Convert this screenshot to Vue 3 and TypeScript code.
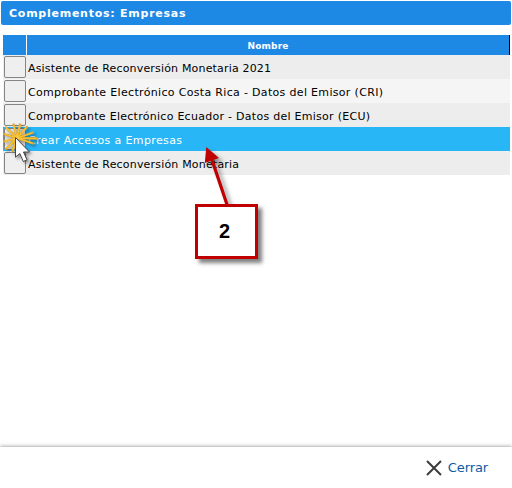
<script setup lang="ts">
interface Complement {
  name: string
  width: number
  selected?: boolean
}

const rows: Complement[] = [
  { name: 'Asistente de Reconversión Monetaria 2021', width: 243 },
  { name: 'Comprobante Electrónico Costa Rica - Datos del Emisor (CRI)', width: 355 },
  { name: 'Comprobante Electrónico Ecuador - Datos del Emisor (ECU)', width: 342 },
  { name: 'Crear Accesos a Empresas', width: 154, selected: true },
  { name: 'Asistente de Reconversión Monetaria', width: 211 },
]
</script>

<template>
  <main class="dialog">
    <h1 class="title">Complementos: Empresas</h1>
    <section class="grid">
      <div class="head">
        <span class="head-check"></span>
        <span class="head-name">Nombre</span>
      </div>
      <div v-for="row in rows" :key="row.name" class="row" :class="{ selected: row.selected }">
        <button class="check" type="button"></button>
        <svg class="name" width="400" height="24">
          <text x="0" y="17" :textLength="row.width" lengthAdjust="spacing">{{ row.name }}</text>
        </svg>
      </div>
    </section>
    <footer class="footer">
      <button class="close" type="button">
        <svg width="16" height="16" viewBox="0 0 16 16">
          <path d="M1 1L15 15M15 1L1 15" fill="none" stroke="#3c3c3c" stroke-width="2" />
        </svg>
        <span>Cerrar</span>
      </button>
    </footer>

    <svg class="click" width="60" height="60" viewBox="0 120 60 60">
      <path
        d="M17 138L6 127.500M17 138L13.500 124.500M17 138L20 124.500M17 138L27 127M17 138L33 132.500M17 138L37 138.500M17 138L33 143.500M17 138L4 134M17 138L4 141.500M17 138L6 149M17 138L12.500 151"
        fill="none" stroke="#dda41c" stroke-width="2.300" stroke-linecap="round"
      />
      <path
        d="M17 138L6.500 128M17 138L13.700 125.500M17 138L19.800 125.500M17 138L26 128M17 138L32 133M17 138L36 138.500M17 138L32 143M17 138L5 134.300M17 138L5 141.200M17 138L7 148M17 138L12.800 150"
        fill="none" stroke="#f8c63c" stroke-width="1.200" stroke-linecap="round"
      />
      <path
        class="pointer"
        d="M15.500 137.500V157.200L19.800 153.500L23.300 161.500L27 159.800L23.500 152H29.500Z"
        fill="#fff" stroke="#454545" stroke-width="1" stroke-linejoin="round"
      />
    </svg>

    <svg class="arrow" width="50" height="70" viewBox="195 140 50 70">
      <path d="M227.500 206L211 157" fill="none" stroke="#c00000" stroke-width="3.200" />
      <path d="M206.300 147L219 158L204.800 163Z" fill="#c00000" />
    </svg>
    <div class="callout">2</div>
  </main>
</template>

<style>
body {
  margin: 0;
  background: #fff;
}
</style>

<style scoped>
.dialog {
  position: relative;
  box-sizing: border-box;
  width: 512px;
  height: 488px;
  padding-top: 1px;
  display: flex;
  flex-direction: column;
  overflow: hidden;
  background: #fff;
  font-family: "DejaVu Sans", Verdana, sans-serif;
}

.title {
  box-sizing: border-box;
  height: 24px;
  margin: 0 1px;
  padding-left: 8px;
  border-radius: 2px;
  background: #1e88e5;
  color: #fff;
  font-size: 11px;
  line-height: 26px;
  font-weight: bold;
  letter-spacing: 0.750px;
}

.grid {
  margin: 10px 2px 0 3px;
}

.head {
  display: flex;
  gap: 1px;
  height: 20px;
}

.head-check,
.head-name {
  background: #1e88e5;
}

.head-check {
  width: 23px;
}

.head-name {
  flex: 1;
  border-right: 1px solid #000;
  color: #fff;
  font-size: 9px;
  line-height: 22px;
  font-weight: bold;
  letter-spacing: 0.150px;
  text-align: center;
}

.row {
  display: flex;
  align-items: center;
  height: 24px;
  padding-left: 1px;
  background: #ededed;
}

.row:nth-child(3) {
  background: #f5f5f5;
}

.row.selected {
  background: #29b6f6;
}

.check {
  box-sizing: border-box;
  width: 22px;
  height: 22px;
  padding: 0;
  border: 1px solid #858585;
  border-radius: 2px;
  background: #efefef;
}

.name {
  margin-left: 2px;
  font-size: 11px;
  fill: #000;
}

.selected .name {
  fill: #fff;
}

.footer {
  box-sizing: border-box;
  height: 41px;
  margin-top: auto;
  padding: 0 24px 0 0;
  display: flex;
  align-items: center;
  justify-content: flex-end;
  box-shadow: 0 0 4px rgba(0, 0, 0, 0.500);
  background: #fff;
}

.close {
  display: flex;
  align-items: center;
  gap: 6px;
  padding: 0;
  border: 0;
  background: none;
  color: #0d5aa7;
  font-family: inherit;
  font-size: 13px;
  line-height: 16px;
  letter-spacing: -0.100px;
}

.click {
  position: absolute;
  left: 0;
  top: 120px;
  filter: drop-shadow(2px 2px 1.500px rgba(0, 0, 0, 0.400));
}

.arrow {
  position: absolute;
  left: 195px;
  top: 140px;
  overflow: visible;
  filter: drop-shadow(4px 4px 2px rgba(0, 0, 0, 0.400));
}

.callout {
  position: absolute;
  left: 195px;
  top: 204px;
  box-sizing: border-box;
  width: 63px;
  height: 55px;
  padding-right: 4px;
  border: 3px solid #c00000;
  background: #fff;
  box-shadow: 4px 4px 4px rgba(0, 0, 0, 0.500);
  color: #000;
  font-family: "Liberation Sans", Arial, sans-serif;
  font-size: 20px;
  font-weight: bold;
  line-height: 49px;
  text-align: center;
}
</style>
